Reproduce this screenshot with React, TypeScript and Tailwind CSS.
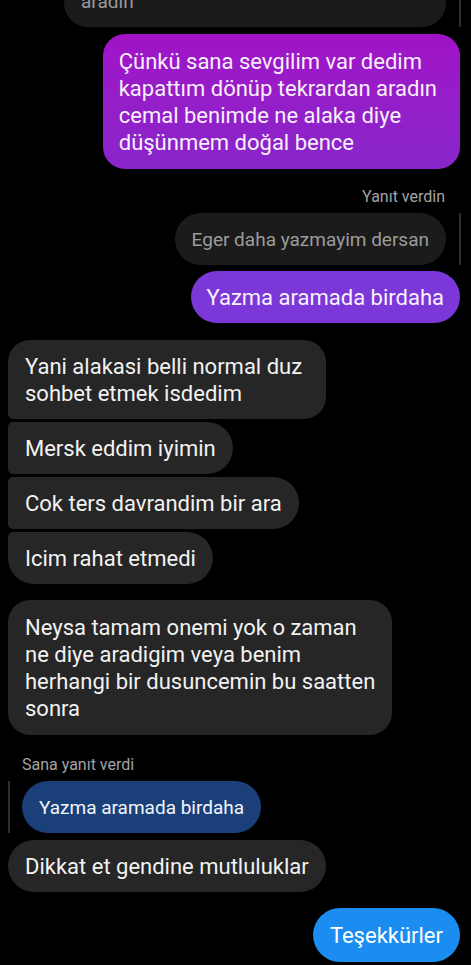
const font = { fontFamily: "Roboto, 'Noto Sans', sans-serif" }

function Lines({ lines }: { lines: string[] }) {
  return (
    <>
      {lines.map((l, i) => (
        <span key={i} className="block whitespace-nowrap">
          {l}
        </span>
      ))}
    </>
  )
}

function Theirs({
  lines,
  corner,
  pr = "pr-[17px]",
  py = "py-[12.5px]",
}: {
  lines: string[]
  corner: string
  pr?: string
  py?: string
}) {
  return (
    <div className="flex">
      <div className={`bg-[#262626] text-[#f2f2f2] pl-[17px] ${py} ${pr} ${corner}`}>
        <Lines lines={lines} />
      </div>
    </div>
  )
}

export default function App() {
  return (
    <div className="min-h-[965px] w-[471px] overflow-hidden bg-black text-[22px] leading-[27px]" style={font}>
      <div className="flex flex-col">
        {/* quoted reply, cut off at top */}
        <div className="flex justify-end pr-[11px] mt-[-25px]">
          <div className="w-[382px] rounded-[24px] bg-[#1b1b1b] px-[17px] py-[12.5px] text-[19px] text-[#9b9b9b]">aradın</div>
          <div className="ml-[13px] mr-[-1px] w-[2px] bg-[#2e2e2e]" />
        </div>

        <div className="flex justify-end pr-[11px] mt-[7px]">
          <div className="rounded-[22px] bg-gradient-to-b from-[#a112c7] to-[#8825ca] pl-[16px] pr-[23px] py-[13.5px] text-[#f7f0fb]">
            <Lines
              lines={[
                "Çünkü sana sevgilim var dedim",
                "kapattım dönüp tekrardan aradın",
                "cemal benimde ne alaka diye",
                "düşünmem doğal bence",
              ]}
            />
          </div>
        </div>

        <div className="mt-[18px] pr-[26px] text-right text-[16px] leading-[20px] text-[#a3a3a3]">Yanıt verdin</div>

        <div className="flex justify-end pr-[11px] mt-[6px]">
          <div className="rounded-[26px] bg-[#1b1b1b] px-[17px] py-[12.5px] text-[19px] text-[#9c9c9c]">
            Eger daha yazmayim dersan
          </div>
          <div className="ml-[13px] mr-[-1px] w-[2px] bg-[#2e2e2e]" />
        </div>

        <div className="flex justify-end pr-[11px] mt-[6px]">
          <div className="rounded-[26px] bg-[#7b37d7] px-[16px] py-[12.5px] text-[#f7f2fd]">Yazma aramada birdaha</div>
        </div>

        <div className="flex flex-col gap-[3px] pl-[8px] mt-[17px]">
          <Theirs
            lines={["Yani alakasi belli normal duz", "sohbet etmek isdedim"]}
            corner="rounded-[22px] rounded-bl-[5px]"
            pr="pr-[24px]"
          />
          <Theirs lines={["Mersk eddim iyimin"]} corner="rounded-[26px] rounded-l-[5px]" />
          <Theirs lines={["Cok ters davrandim bir ara"]} corner="rounded-[26px] rounded-l-[5px]" />
          <Theirs lines={["Icim rahat etmedi"]} corner="rounded-[26px] rounded-tl-[5px]" />
        </div>

        <div className="pl-[8px] mt-[16px]">
          <Theirs
            lines={[
              "Neysa tamam onemi yok o zaman",
              "ne diye aradigim veya benim",
              "herhangi bir dusuncemin bu saatten",
              "sonra",
            ]}
            corner="rounded-[22px]"
            py="py-[13.5px]"
          />
        </div>

        <div className="mt-[20px] pl-[22px] text-[16px] leading-[20px] text-[#a3a3a3]">Sana yanıt verdi</div>

        <div className="flex pl-[8px] mt-[6px]">
          <div className="mr-[12px] w-[2px] bg-[#2e2e2e]" />
          <div className="rounded-[26px] bg-[#1a3f79] px-[17px] py-[12.5px] text-[19px] text-[#f2f5fb]">
            Yazma aramada birdaha
          </div>
        </div>

        <div className="pl-[8px] mt-[7px]">
          <Theirs lines={["Dikkat et gendine mutluluklar"]} corner="rounded-[26px]" />
        </div>

        <div className="flex justify-end pr-[11px] mt-[16px]">
          <div className="rounded-[27px] bg-[#1b8cf0] px-[17px] py-[13.5px] text-white">Teşekkürler</div>
        </div>
      </div>
    </div>
  )
}
